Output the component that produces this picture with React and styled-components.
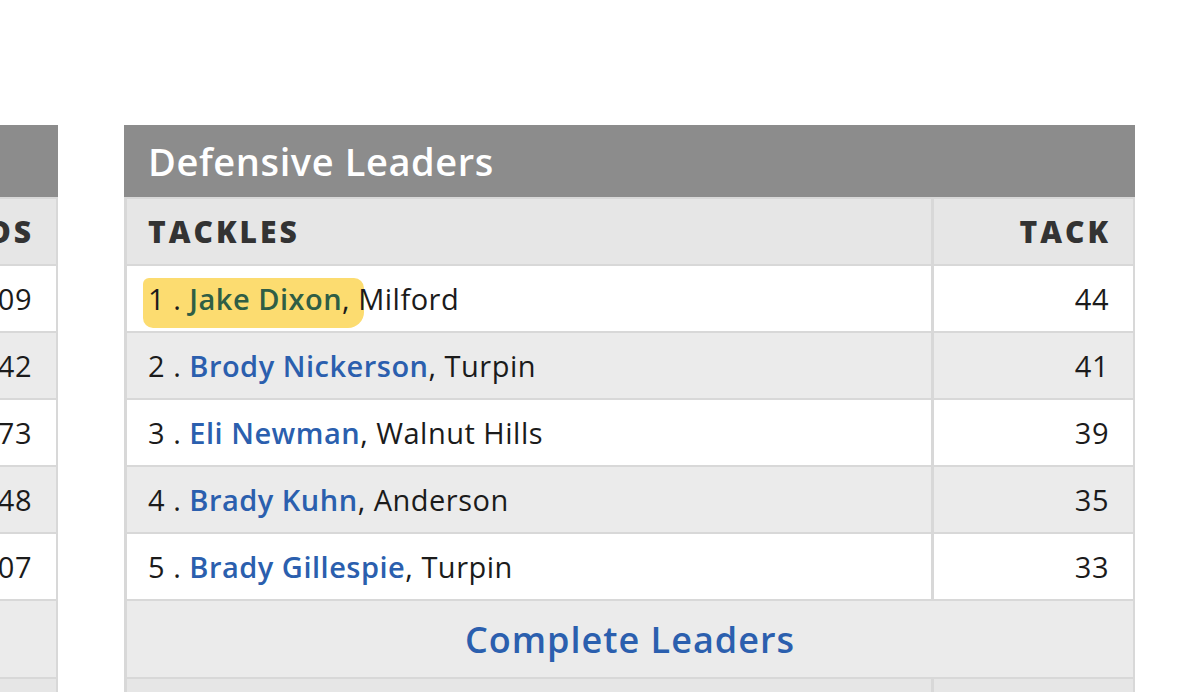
import React from 'react';
import styled, { createGlobalStyle } from 'styled-components';

const GlobalStyle = createGlobalStyle`
  html, body {
    margin: 0;
    padding: 0;
    background: #ffffff;
    overflow: hidden;
  }
  body {
    font-family: "Open Sans", "DejaVu Sans", sans-serif;
  }
`;

const StyledPage = styled.div`
  display: flex;
  align-items: flex-start;
  gap: 66px;
  padding-top: 125px;
  height: 692px;
  box-sizing: border-box;
  overflow: hidden;
`;

const StyledPanel = styled.div`
  flex: 0 0 1011px;
  margin-left: ${({ $shift }) => $shift || 0}px;
  background: #d8d8d8;
  display: flex;
  flex-direction: column;
  gap: 2px;
  padding: 0 2px 0 3px;
  box-sizing: border-box;
`;

const StyledPanelHead = styled.div`
  height: 72px;
  margin: 0 -2px 0 -3px;
  display: flex;
  align-items: center;
  padding-left: 24px;
  background: #8c8c8c;
  color: #ffffff;
  font-size: 38px;
  font-weight: 600;
  letter-spacing: 0.6px;
`;

const StyledRow = styled.div`
  display: flex;
  gap: 3px;
  height: 65px;
`;

const StyledCell = styled.div`
  display: flex;
  align-items: center;
  justify-content: ${({ $right }) => ($right ? 'flex-end' : 'flex-start')};
  padding: 0 24px 0 21px;
  box-sizing: border-box;
  background: ${({ $shade }) => ($shade ? '#ebebeb' : '#ffffff')};
  color: #1b1b1b;
  font-size: 29px;
  letter-spacing: 0.5px;
  white-space: nowrap;
  ${({ $wide }) => ($wide ? 'flex: 1;' : 'flex: 0 0 199px;')}
`;

const StyledHeadCell = styled(StyledCell)`
  background: #e6e6e6;
  color: #333333;
  font-weight: 800;
  font-size: 30px;
  letter-spacing: 3px;
  padding-right: 22px;
`;

const StyledFooter = styled.div`
  height: 76px;
  display: flex;
  align-items: center;
  justify-content: center;
  background: #ebebeb;
`;

const StyledLink = styled.a`
  color: #2b5fae;
  font-weight: 600;
  text-decoration: none;
  font-size: ${({ $big }) => ($big ? '36px' : 'inherit')};
  letter-spacing: ${({ $big }) => ($big ? '1px' : 'inherit')};
`;

const StyledMark = styled.span`
  display: inline-block;
  background: #fcdc70;
  padding: 1px 14px 10px 5px;
  margin: -1px -14px -10px -5px;
  border-radius: 6px 10px 16px 10px;
  & ${StyledLink} {
    color: #2f5e45;
  }
`;

const defense = [
  { name: 'Jake Dixon', school: 'Milford', value: 44 },
  { name: 'Brody Nickerson', school: 'Turpin', value: 41 },
  { name: 'Eli Newman', school: 'Walnut Hills', value: 39 },
  { name: 'Brady Kuhn', school: 'Anderson', value: 35 },
  { name: 'Brady Gillespie', school: 'Turpin', value: 33 },
];

const offense = [
  { name: 'Player One', school: 'Milford', value: '1,209' },
  { name: 'Player Two', school: 'Turpin', value: '842' },
  { name: 'Player Three', school: 'Anderson', value: '773' },
  { name: 'Player Four', school: 'Walnut Hills', value: '748' },
  { name: 'Player Five', school: 'Loveland', value: '707' },
];

const LeaderRow = ({ rank, item, shade, marked }) => {
  const label = (
    <>
      {rank} . <StyledLink href="#">{item.name}</StyledLink>,
    </>
  );
  return (
    <StyledRow>
      <StyledCell $wide $shade={shade}>
        <span>
          {marked ? <StyledMark>{label}</StyledMark> : label} {item.school}
        </span>
      </StyledCell>
      <StyledCell $right $shade={shade}>{item.value}</StyledCell>
    </StyledRow>
  );
};

const Panel = ({ title, stat, short, rows, shift, markFirst }) => (
  <StyledPanel $shift={shift}>
    <StyledPanelHead>{title}</StyledPanelHead>
    <StyledRow>
      <StyledHeadCell $wide>{stat}</StyledHeadCell>
      <StyledHeadCell $right>{short}</StyledHeadCell>
    </StyledRow>
    {rows.map((item, i) => (
      <LeaderRow
        key={item.name}
        rank={i + 1}
        item={item}
        shade={i % 2 === 1}
        marked={markFirst && i === 0}
      />
    ))}
    <StyledFooter>
      <StyledLink href="#" $big>Complete Leaders</StyledLink>
    </StyledFooter>
    <StyledRow>
      <StyledHeadCell $wide />
      <StyledHeadCell $right />
    </StyledRow>
  </StyledPanel>
);

const App = () => (
  <>
    <GlobalStyle />
    <StyledPage>
      <Panel title="Offensive Leaders" stat="RUSHING" short="YDS" rows={offense} shift={-953} />
      <Panel title="Defensive Leaders" stat="TACKLES" short="TACK" rows={defense} markFirst />
    </StyledPage>
  </>
);

export default App;
